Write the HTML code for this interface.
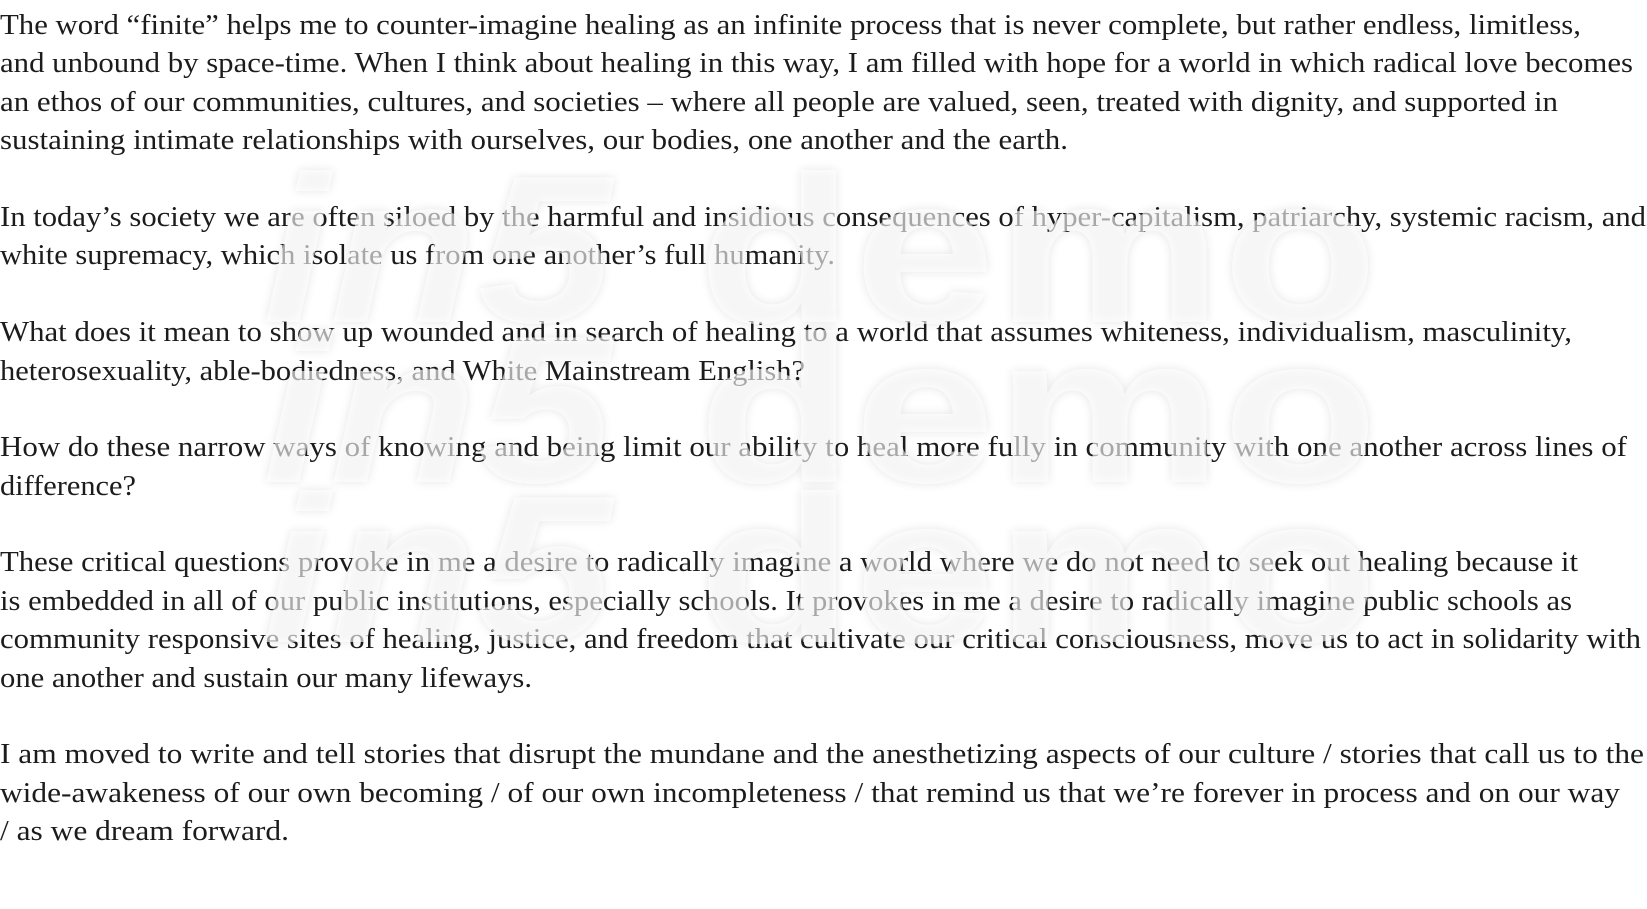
<!DOCTYPE html>
<html><head><meta charset="utf-8"><style>
html,body{margin:0;padding:0;background:#fff;width:1647px;height:909px;overflow:hidden;position:relative}
#t{position:absolute;left:0;top:6px;font-family:"Liberation Serif",serif;font-size:29px;line-height:38.4px;color:#1c1c1c}
.l{white-space:nowrap;transform-origin:0 0;height:38.4px}
.wm{position:absolute;font-family:"Liberation Sans",sans-serif;font-weight:bold;font-size:210px;line-height:1;white-space:nowrap;color:rgba(255,255,255,0.62);text-shadow:0 0 9px rgba(0,0,0,0.10);transform-origin:0 0;z-index:2}
.i5{font-style:italic}
</style></head><body>
<div id="t">
<div class="l" data-w="1581">The word “finite” helps me to counter-imagine healing as an infinite process that is never complete, but rather endless, limitless,</div>
<div class="l" data-w="1633">and unbound by space-time. When I think about healing in this way, I am filled with hope for a world in which radical love becomes</div>
<div class="l" data-w="1558">an ethos of our communities, cultures, and societies – where all people are valued, seen, treated with dignity, and supported in</div>
<div class="l" data-w="1068">sustaining intimate relationships with ourselves, our bodies, one another and the earth.</div>
<div class="l"></div>
<div class="l" data-w="1646">In today’s society we are often siloed by the harmful and insidious consequences of hyper-capitalism, patriarchy, systemic racism, and</div>
<div class="l" data-w="835">white supremacy, which isolate us from one another’s full humanity.</div>
<div class="l"></div>
<div class="l" data-w="1572">What does it mean to show up wounded and in search of healing to a world that assumes whiteness, individualism, masculinity,</div>
<div class="l" data-w="805">heterosexuality, able-bodiedness, and White Mainstream English?</div>
<div class="l"></div>
<div class="l" data-w="1627">How do these narrow ways of knowing and being limit our ability to heal more fully in community with one another across lines of</div>
<div class="l" data-w="136">difference?</div>
<div class="l"></div>
<div class="l" data-w="1578">These critical questions provoke in me a desire to radically imagine a world where we do not need to seek out healing because it</div>
<div class="l" data-w="1572">is embedded in all of our public institutions, especially schools. It provokes in me a desire to radically imagine public schools as</div>
<div class="l" data-w="1641">community responsive sites of healing, justice, and freedom that cultivate our critical consciousness, move us to act in solidarity with</div>
<div class="l" data-w="532">one another and sustain our many lifeways.</div>
<div class="l"></div>
<div class="l" data-w="1644">I am moved to write and tell stories that disrupt the mundane and the anesthetizing aspects of our culture / stories that call us to the</div>
<div class="l" data-w="1620">wide-awakeness of our own becoming / of our own incompleteness / that remind us that we’re forever in process and on our way</div>
<div class="l" data-w="289">/ as we dream forward.</div>
</div>
<div class="wm i5" data-w="350" style="left:262px;top:145px">in5</div>
<div class="wm" data-w="680" style="left:698px;top:145px">demo</div>
<div class="wm i5" data-w="350" style="left:262px;top:305px">in5</div>
<div class="wm" data-w="680" style="left:698px;top:305px">demo</div>
<div class="wm i5" data-w="350" style="left:262px;top:465px">in5</div>
<div class="wm" data-w="680" style="left:698px;top:465px">demo</div>
<script>
document.querySelectorAll('.l[data-w]').forEach(function(e){
 var s=document.createElement('span');s.innerHTML=e.innerHTML;e.innerHTML='';e.appendChild(s);
 var w=s.getBoundingClientRect().width;var t=+e.dataset.w;
 if(w>0){e.style.transform='scaleX('+(t/w)+')';}
});
document.querySelectorAll('.wm').forEach(function(e){
 var w=e.getBoundingClientRect().width;var t=+e.dataset.w;
 if(w>0){e.style.transform='scaleX('+(t/w)+')';}
});
</script>
</body></html>
